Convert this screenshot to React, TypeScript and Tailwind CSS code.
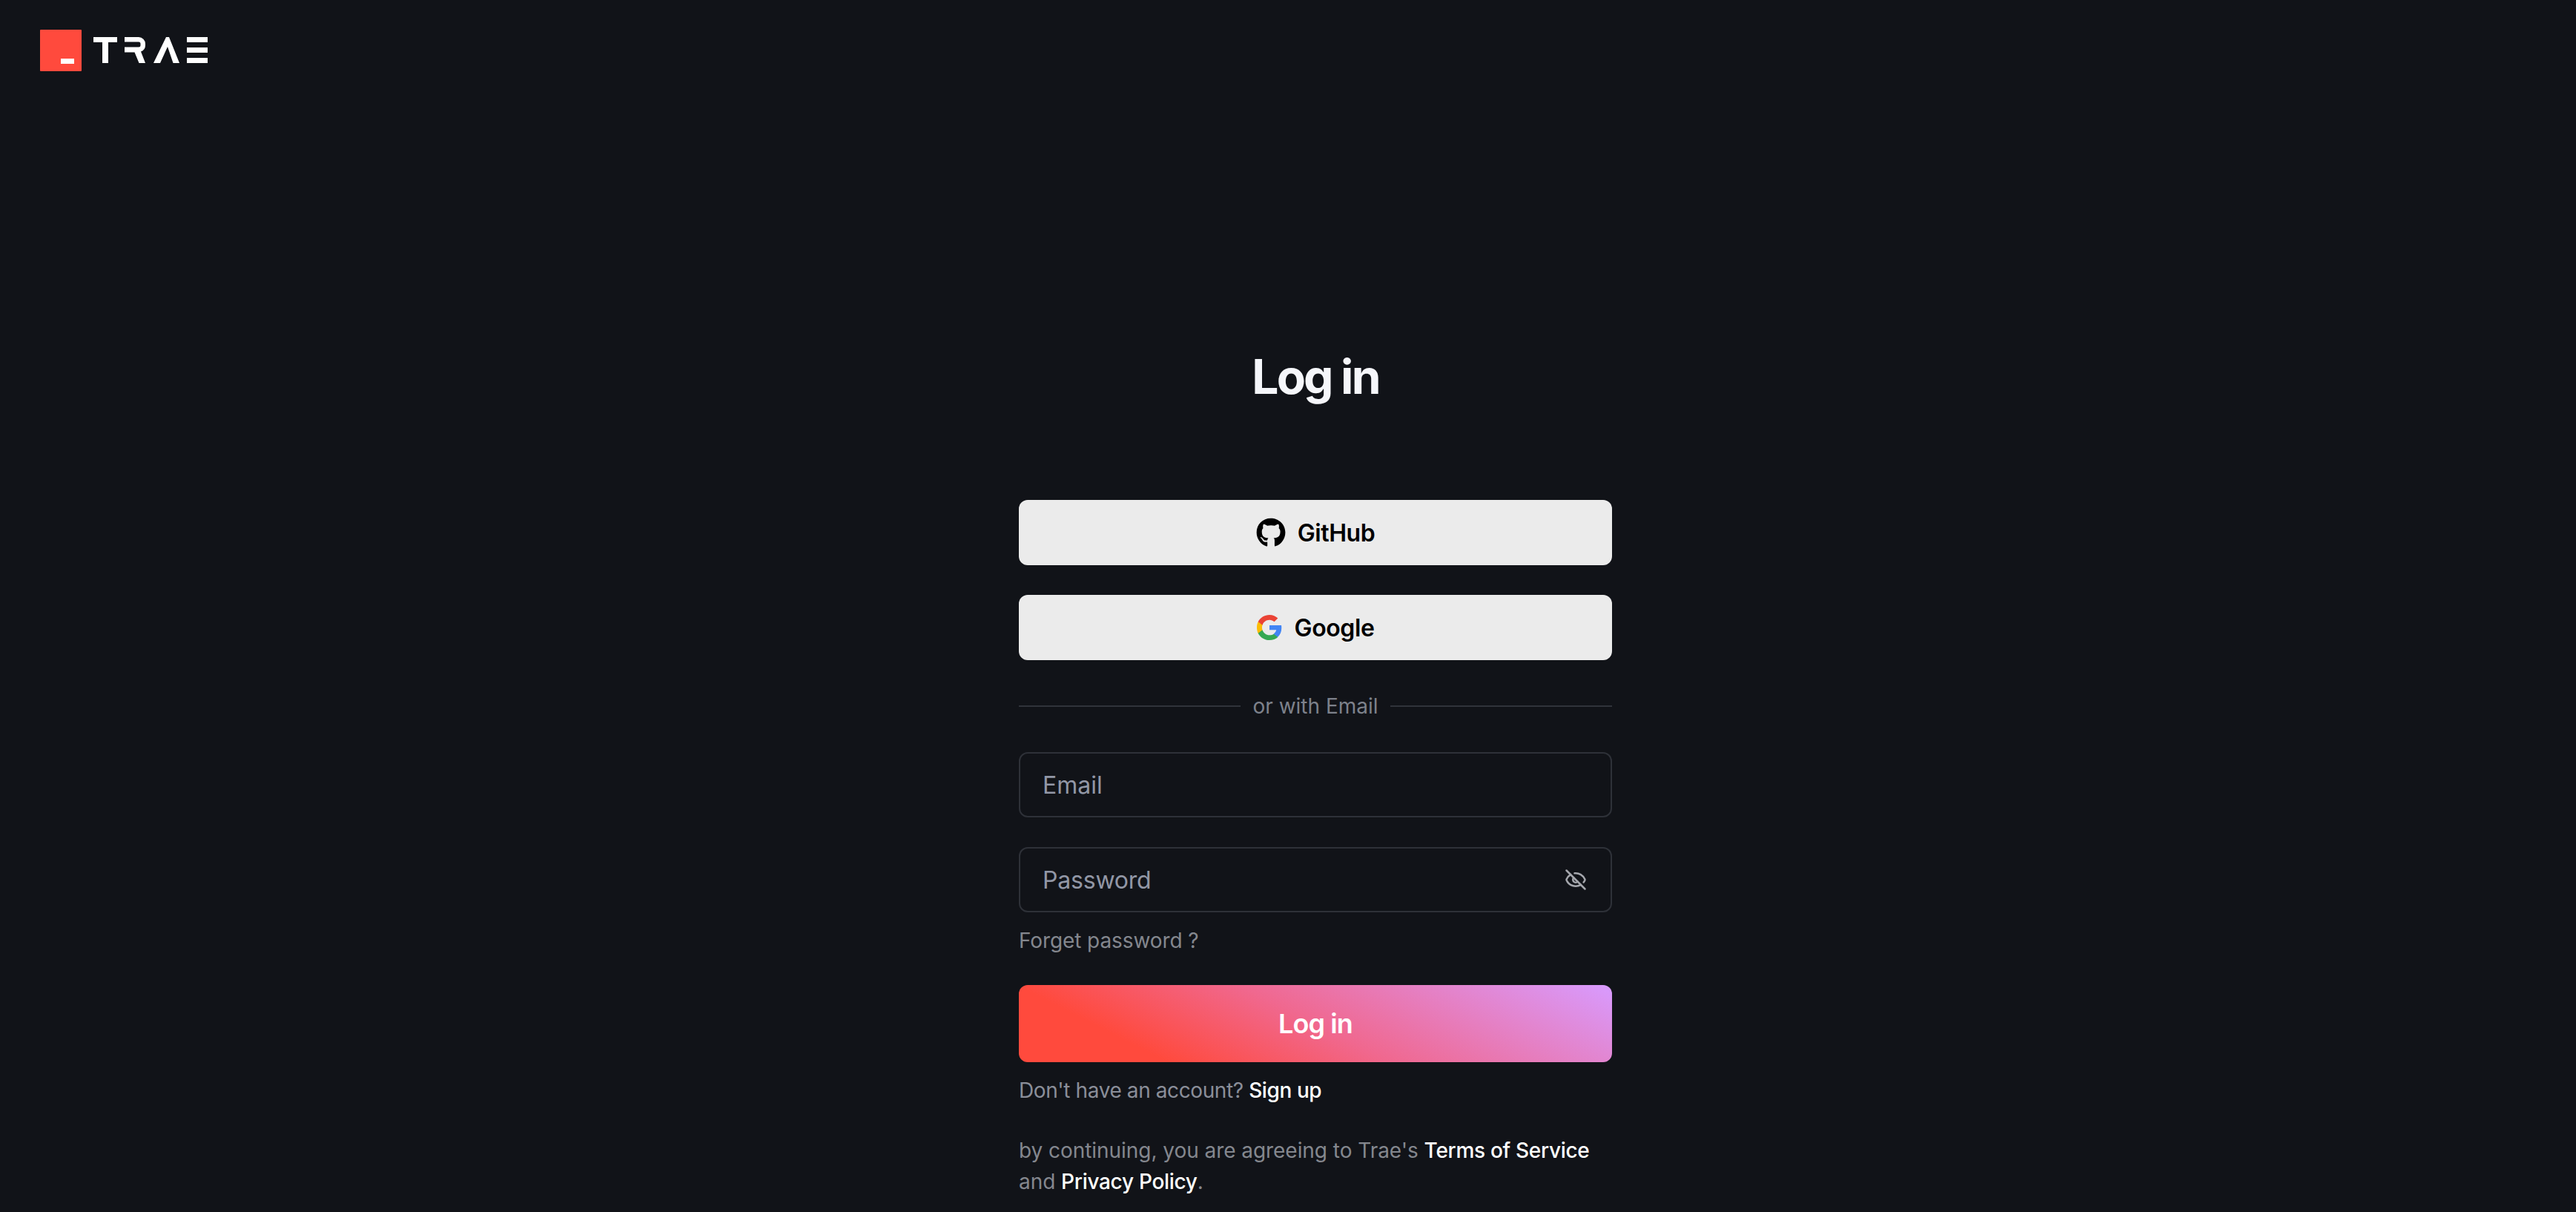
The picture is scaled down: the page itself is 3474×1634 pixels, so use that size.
import React from "react";
import { FaGithub } from "react-icons/fa";
import { EyeOff } from "lucide-react";

const Logo = () => (
  <svg width="226" height="56" viewBox="54 40 226 56" fill="none">
    <rect x="54" y="40" width="56" height="56" rx="1" fill="#FF4A3D" />
    <rect x="82" y="79" width="18" height="7" fill="#fff" />
    <path d="M126 50h32v7h-12v28h-8V57h-12z" fill="#fff" />
    <path d="M168 50h19a9 9 0 0 1 9 9v2a9 9 0 0 1-6 8.500l6 15.500h-8.500l-6-14.500H168v-7h19a2.500 2.500 0 0 0 2.500-2.500v-2a2.500 2.500 0 0 0-2.500-2.500h-19z" fill="#fff" />
    <path d="M224 50h4l14 35h-8.500l-7.500-22-10 22h-9z" fill="#fff" />
    <path d="M252 50h28v7h-28zM252 64h28v7h-28zM252 78h28v7h-28z" fill="#fff" />
  </svg>
);

const GoogleIcon = () => (
  <svg width="34" height="34" viewBox="0 0 24 24">
    <path fill="#4285F4" d="M23.500 12.270c0-.8-.1-1.600-.2-2.300H12v4.400h6.500c-.3 1.500-1.100 2.700-2.400 3.600v3h3.900c2.200-2.100 3.500-5.100 3.500-8.700z" />
    <path fill="#34A853" d="M12 24c3.200 0 6-1.100 8-2.900l-3.900-3c-1.100.7-2.500 1.200-4.100 1.200-3.100 0-5.800-2.100-6.700-5H1.200v3.100C3.200 21.300 7.300 24 12 24z" />
    <path fill="#FBBC05" d="M5.300 14.300c-.2-.7-.4-1.500-.4-2.300s.1-1.600.4-2.300V6.600H1.200C.4 8.200 0 10 0 12s.4 3.800 1.200 5.400l4.100-3.100z" />
    <path fill="#EA4335" d="M12 4.800c1.800 0 3.300.6 4.600 1.800l3.400-3.400C18 1.200 15.200 0 12 0 7.300 0 3.200 2.700 1.200 6.600l4.100 3.100c1-2.900 3.600-4.900 6.700-4.900z" />
  </svg>
);

export default function App() {
  return (
    <div className="h-[1634px] w-full overflow-hidden bg-[#111318] font-['Inter','Liberation_Sans',sans-serif]">
      <header className="pl-[54px] pt-[40px] h-[96px]">
        <Logo />
      </header>
      <div className="flex justify-center pl-[74px]">
        <main className="w-[800px] flex flex-col pt-[372px]">
          <h1 className="text-center text-[64px] leading-[80px] font-bold text-[#f5f6fa] h-[80px] tracking-[-2.8px]">Log in</h1>
          <div className="mt-[126px] flex flex-col gap-[40px]">
            <button className="h-[88px] rounded-[12px] bg-[#ebebeb] flex items-center justify-center gap-[16px] text-[32px] font-semibold tracking-[-0.4px] text-black">
              <FaGithub className="text-[40px]" />
              <span className="pt-[2px]">GitHub</span>
            </button>
            <button className="h-[88px] rounded-[12px] bg-[#ebebeb] flex items-center justify-center gap-[17px] text-[32px] font-semibold tracking-[-0.4px] text-black">
              <GoogleIcon />
              <span className="pt-[2px]">Google</span>
            </button>
          </div>
          <div className="mt-[40px] h-[44px] flex items-center gap-[16px] text-[28px] text-[#7d818b]">
            <div className="flex-1 h-[2px] bg-[#30333a]" />
            <span>or with Email</span>
            <div className="flex-1 h-[2px] bg-[#30333a]" />
          </div>
          <div className="mt-[40px] h-[88px] rounded-[12px] border-2 border-[#2e3138] flex items-center px-[30px] text-[32px] text-[#9297a6]">
            <span className="pt-[2px]">Email</span>
          </div>
          <div className="mt-[40px] h-[88px] rounded-[12px] border-2 border-[#2e3138] flex items-center justify-between pl-[30px] pr-[32px] text-[32px] text-[#9297a6]">
            <span className="pt-[2px] tracking-[-0.2px]">Password</span>
            <EyeOff size={30} strokeWidth={2} className="text-[#a5a7ad]" />
          </div>
          <div className="mt-[20px] h-[36px] leading-[36px] text-[28px] tracking-[-0.1px] text-[#84878e]">Forget password ?</div>
          <button className="mt-[42px] h-[104px] rounded-[12px] bg-[linear-gradient(27deg,#ff4a3d_20%,#f0688f_50%,#d89bff_100%)] text-[36px] font-semibold tracking-[-0.9px] text-white">Log in</button>
          <p className="mt-[20px] text-[28px] leading-[36px] tracking-[-0.4px] text-[#8a8e99]">
            Don't have an account? <span className="font-medium text-white">Sign up</span>
          </p>
          <p className="mt-[42px] text-[28px] leading-[42px] tracking-[-0.05px] text-[#84878e]">
            by continuing, you are agreeing to Trae's <span className="font-medium tracking-[-0.3px] text-white">Terms of Service</span> and <span className="font-medium tracking-[-0.3px] text-white">Privacy Policy</span>.
          </p>
        </main>
      </div>
    </div>
  );
}
